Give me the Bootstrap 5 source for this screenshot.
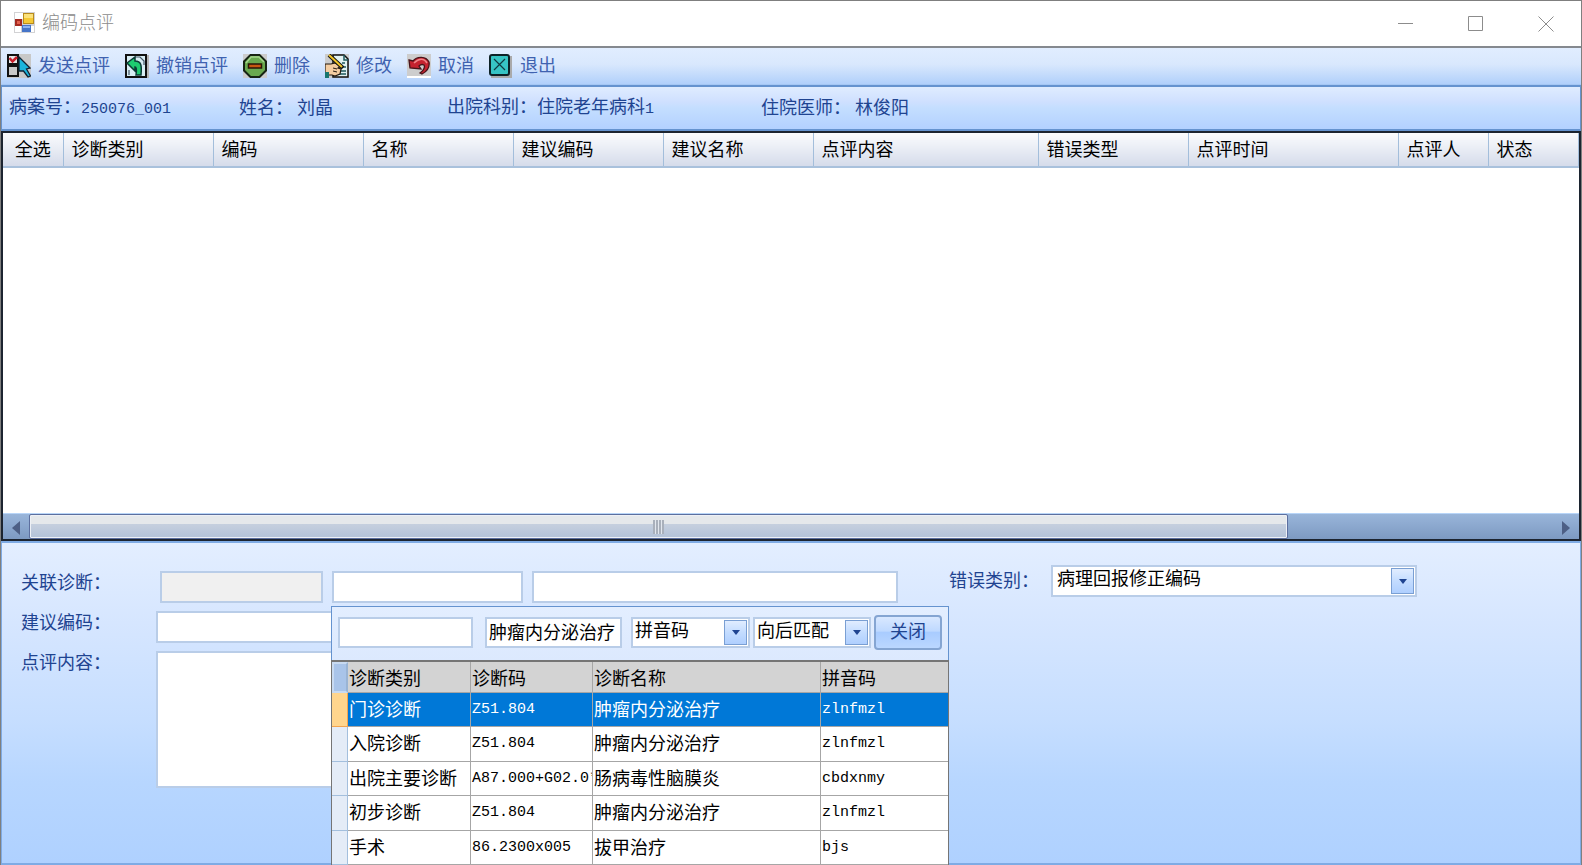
<!DOCTYPE html>
<html lang="zh-CN">
<head>
<meta charset="utf-8">
<meta name="viewport" content="width=device-width, initial-scale=1">
<title>编码点评</title>
<link href="https://cdn.jsdelivr.net/npm/bootstrap@5.3.0/dist/css/bootstrap.min.css" rel="stylesheet">
<style>
  :root { --ink: #1f4491; --line: #b3cbea; --edge: #6593cf; }
  body { font-family: "Liberation Sans", "Noto Sans CJK SC", sans-serif; font-size: 18px; line-height: 24px; color: #000; background: #fff; overflow: hidden; }
  .mono { font-family: "Liberation Mono", monospace; font-size: 15px; }
  .app-window { min-height: 100vh; border: 1px solid #7f7f7f; border-bottom: 0; }

  .title-bar { height: 47px; padding: 0 12px 2px 13px; border-bottom: 2px solid #85898f; color: #8c8c8c; }
  .title-bar h1 { font-size: 18px; line-height: 24px; font-weight: 300; margin: 0; }
  .win-btn { border: 0; background: none; width: 46px; height: 32px; padding: 0; line-height: 1; }

  .tool-strip { height: 37px; padding: 0 6px 1px; gap: 15px; background: linear-gradient(#e1edff, #d9e8fd 45%, #b1d0fb); border-bottom: 1px solid #a5c7f4; }
  .tool-btn { border: 0; background: none; padding: 0; gap: 7px; color: #3f62b0; }
  .tool-btn svg { width: 24px; height: 24px; }

  .info-bar { height: 46px; padding: 0 7px; border: 2px solid var(--edge); border-left-width: 1px; border-right-width: 1px; background: linear-gradient(#dfecff, #cfe0ff 35%, #c4deff 50%, #b3d1ff); color: var(--ink); display: grid; grid-template-columns: 230px 208px 314px 1fr; align-items: center; }

  .review-grid { border: 2px solid #1c2430; min-height: 300px; }
  .review-table { table-layout: fixed; width: 100%; margin: 0; }
  .review-table th { height: 34px; padding: 0 8px; font-weight: 400; line-height: 24px; background: linear-gradient(#fafbfd, #e8ecf4 50%, #d5dbea); border-right: 1px solid #a3bedb; border-bottom: 2px solid #a9c1dc; white-space: nowrap; }

  .h-scroll { height: 26px; background: linear-gradient(#99b5da, #7d9ac2); border-top: 1px solid #b8d5f8; }
  .scroll-arrow { width: 26px; border: 0; padding: 0; background: none; line-height: 1; }
  .scroll-thumb { width: 82.6%; border: 1px solid #5c6f9f; border-radius: 2px; box-shadow: inset 0 0 0 1px #eef1f6; background: linear-gradient(#e5e8eb 0 40%, #c5cfde 41%, #b3c2d8); }
  .grip { width: 11px; height: 14px; background: repeating-linear-gradient(90deg, #a9b0bb 0 2px, #e2e7ee 2px 3px); }

  .edit-panel { height: 324px; padding: 22px 19px 0; border: 2px solid #7fabe4; border-left-width: 1px; border-right-width: 1px; background: linear-gradient(#e3eeff, #d6e6ff 25%, #c6deff 55%, #b7d6ff 75%, #afd1ff); color: var(--ink); }
  .field { display: block; width: 100%; height: 32px; border: 2px solid #b9cde8; border-radius: 0; padding: 0 4px; background: #fff; color: #000; appearance: none; outline: 0; }
  .field:disabled { background: #f0f0f0; }
  .form-rows { width: 928px; padding-top: 6px; }
  .field-label { width: 135px; }
  .drop { position: relative; }
  .drop-mark { position: absolute; top: 3px; right: 3px; bottom: 3px; width: 23px; border: 1px solid #7a9fd3; background: linear-gradient(#e1edff, #c3dcff 50%, #afcfff); pointer-events: none; display: flex; align-items: center; justify-content: center; }
  .field.notes { height: 137px; resize: none; }

  /* lookup window opens over the edit panel */
  .lookup { position: absolute; left: 329px; top: 63px; width: 618px; color: #000; }
  .lookup-head { height: 54px; padding: 8px 6px 0 6px; border: 1px solid var(--edge); border-bottom: 0; background: linear-gradient(#e3eeff, #dce9fe); }
  .lookup-head .field { height: 31px; padding: 0 2px 4px; }
  .lookup-cell { padding-top: 2px; }
  .close-btn { width: 68px; height: 35px; border: 2px solid #85a5d2; border-radius: 4px; padding: 0 0 2px; color: var(--ink); background: linear-gradient(#d9e8ff, #bfd9ff 45%, #a9ccff 50%, #bbd7ff); }
  .lookup-table { table-layout: fixed; width: 100%; margin: 0; border: 2px solid #757575; border-width: 2px 1px 0; border-collapse: separate; border-spacing: 0; background: #fff; }
  .lookup-table th, .lookup-table td { padding: 0 1px; font-weight: 400; white-space: nowrap; overflow: hidden; border-right: 1px solid #a6a6a6; border-bottom: 1px solid #a6a6a6; line-height: 24px; }
  .lookup-table th:last-child, .lookup-table td:last-child { border-right: 0; }
  .lookup-table thead tr { height: 31px; }
  .lookup-table thead th { background: #d3d3d3; padding-top: 4px; }
  .lookup-table tbody tr { height: 34px; }
  .lookup-table tbody tr:nth-child(even) { height: 35px; }
  .lookup-table tbody .row-mark { background: #e4ecf7; border-color: #a3bfdd; }
  .lookup-table thead .row-mark { background: #a9c4e9; border: 2px solid #c8daf1; border-right-color: #9ab4d4; }
  .lookup-table .picked td { background: #0078d7; color: #fff; }
  .lookup-table .picked .row-mark { background: #ffd58d; border-color: #f3a44e; }
</style>
</head>
<body>
<main class="app-window d-flex flex-column">
  <header class="title-bar d-flex align-items-center flex-shrink-0">
    <svg width="21" height="21" viewBox="0 0 21 21" aria-hidden="true" style="margin-right:7px">
      <rect width="21" height="21" fill="#d2d2d4"/><path d="M1 1h8v6H1zM1 14h6v6H1zM17 14h3v6h-3z" fill="#fff"/>
      <rect x="9" y="1" width="11" height="11" fill="#b98b1c"/><rect x="10" y="2" width="9" height="9" fill="#f5c934"/><path d="M10 2h9v4h-9z" fill="#fbe27a"/>
      <rect x="1" y="7" width="7" height="7" fill="#a52a20"/><rect x="3" y="9" width="3" height="3" fill="#e2604e"/>
      <rect x="8" y="13" width="9" height="7" fill="#4675c8"/><path d="M9 14h7v2H9z" fill="#8db2ef"/>
    </svg>
    <h1>编码点评</h1>
    <div class="ms-auto d-flex" style="gap:24px">
      <button class="win-btn" aria-label="最小化"><svg width="16" height="16" viewBox="0 0 16 16" fill="none" stroke="#8c8c8c"><path d="M0 7.500h15"/></svg></button>
      <button class="win-btn" aria-label="最大化"><svg width="16" height="16" viewBox="0 0 16 16" fill="none" stroke="#8c8c8c"><path d="M.5.5h14v14H.5z"/></svg></button>
      <button class="win-btn" aria-label="关闭窗口"><svg width="16" height="16" viewBox="0 0 16 16" fill="none" stroke="#8c8c8c"><path d="M.5.5l15 15M15.500.5l-15 15"/></svg></button>
    </div>
  </header>

  <nav class="tool-strip d-flex align-items-center flex-shrink-0" aria-label="工具栏">
    <button class="tool-btn d-flex align-items-center">
      <svg viewBox="0 0 24 24" aria-hidden="true"><path fill="#c8c8c8" d="M0 0h24v24H0z"/><path fill="#111" d="M0 0h12v23H0z"/><path fill="#e8e8e8" d="M2 2h8v7H2z"/><path fill="#c9c9c9" d="M2 13h8v8H2z"/><path d="M2.500 4l3 3.500L10 3" fill="none" stroke="#c8202c" stroke-width="2.500"/><path d="M12 3l11 11-3.500 1 4 7-2.500 1-4.500-6L12 17z" fill="#1bb4dc" stroke="#123" stroke-width="1.300"/></svg>
      <span>发送点评</span></button>
    <button class="tool-btn d-flex align-items-center">
      <svg viewBox="0 0 24 24" aria-hidden="true"><path fill="#b5b5b5" d="M2 1h22v23H2z"/><path fill="#d8eef4" stroke="#111" stroke-width="2" d="M1 1h20v22H1z"/><path d="M10 3h5l4 4v4M4 21v-5" fill="none" stroke="#456" stroke-width="1.200"/><path d="M2 9l8-6v4c6 0 7 4 6 14h-5c1-6 0-8-1-8v4z" fill="#1dcb70" stroke="#0b3a35" stroke-width="1.500"/></svg>
      <span>撤销点评</span></button>
    <button class="tool-btn d-flex align-items-center">
      <svg viewBox="0 0 24 24" aria-hidden="true"><path fill="#ccc" d="M0 0h24v24H0z"/><path d="M7.500 1h9L23 7.500v9L16.500 23h-9L1 16.500v-9z" fill="#69a94f" stroke="#172414" stroke-width="2"/><path d="M3 9l5-6h8l5 5" fill="none" stroke="#a5d58d" stroke-width="1.500"/><path d="M5.500 10h13v4h-13z" fill="#c65710" stroke="#2b1608" stroke-width="1.500"/></svg>
      <span>删除</span></button>
    <button class="tool-btn d-flex align-items-center">
      <svg viewBox="0 0 24 24" aria-hidden="true"><path fill="#ccc" d="M0 0h24v24H0z"/><path fill="#e2f2f2" stroke="#111" stroke-width="1.500" d="M8 1h11l4 4v18H8z"/><path d="M19 1v5h4M17 9h3M18 13h3M13 20h8M15 17h6" fill="none" stroke="#1f5a5d" stroke-width="1.500"/><path d="M0 10h6l4-1 6 3-3 2 3 1-1 5-5 2-3-1H0z" fill="#f4cda1" stroke="#241a10" stroke-width="1.200"/><path d="M8 14l4 1M8 17l4 1" stroke="#241a10"/><path d="M4 1l14 13" stroke="#111" stroke-width="4"/><path d="M4 1l13 12" stroke="#f1c529" stroke-width="2"/><path fill="#18766f" d="M0 18h4v6H0z"/></svg>
      <span>修改</span></button>
    <button class="tool-btn d-flex align-items-center">
      <svg viewBox="0 0 24 24" aria-hidden="true"><path fill="#cdcdcd" d="M0 0h24v24H0z"/><path fill="#fff" d="M0 22h24v2H0z"/><path d="M2 6l4 1c4-5 13-5 16 1 1 6-3 10-7 12l-2-1c4-3 5-6 4-8-2-1-4 0-5 1l2 3-11-1z" fill="#c5222f" stroke="#47141a" stroke-width="1.300"/><path d="M7 9c5-5 10-5 13 0" fill="none" stroke="#ef8589" stroke-width="1.500"/></svg>
      <span>取消</span></button>
    <button class="tool-btn d-flex align-items-center">
      <svg viewBox="0 0 24 24" aria-hidden="true"><path fill="#aaa" d="M2 2h21v22H2z"/><rect x="1" y="1" width="19" height="20" rx="2" fill="#37c4c4" stroke="#0d2227" stroke-width="2"/><path d="M5 5l11 11M16 5L5 16" stroke="#103a42" stroke-width="1.200"/></svg>
      <span>退出</span></button>
  </nav>

  <section class="info-bar flex-shrink-0">
    <div>病案号：<span class="mono">250076_001</span></div>
    <div>姓名：<span class="ms-1">刘晶</span></div>
    <div>出院科别：住院老年病科<span class="mono">1</span></div>
    <div>住院医师：<span class="ms-1">林俊阳</span></div>
  </section>

  <section class="review-grid d-flex flex-column flex-grow-1">
    <table class="review-table">
      <colgroup><col style="width:60px"><col style="width:150px"><col style="width:150px"><col style="width:150px"><col style="width:150px"><col style="width:150px"><col style="width:225px"><col style="width:150px"><col style="width:210px"><col style="width:90px"><col></colgroup>
      <thead><tr><th class="text-center">全选</th><th>诊断类别</th><th>编码</th><th>名称</th><th>建议编码</th><th>建议名称</th><th>点评内容</th><th>错误类型</th><th>点评时间</th><th>点评人</th><th>状态</th></tr></thead>
    </table>
    <div class="h-scroll d-flex mt-auto">
      <button class="scroll-arrow" aria-label="向左滚动"><svg width="8" height="14" viewBox="0 0 8 14"><path d="M8 0v14L0 7z" fill="#4d5f85"/></svg></button>
      <div class="flex-grow-1 d-flex"><div class="scroll-thumb d-flex align-items-center justify-content-center"><span class="grip"></span></div></div>
      <button class="scroll-arrow" aria-label="向右滚动"><svg width="8" height="14" viewBox="0 0 8 14"><path d="M0 0v14l8-7z" fill="#4d5f85"/></svg></button>
    </div>
  </section>

  <form class="edit-panel position-relative flex-shrink-0">
    <div class="d-flex align-items-start">
      <div class="form-rows">
        <div class="d-flex align-items-start mb-2">
          <label class="field-label" for="rel-kind">关联诊断：</label>
          <div class="d-flex ms-1" style="width:738px;gap:9px">
            <div style="width:163px"><input class="field" id="rel-kind" disabled></div>
            <div style="width:191px"><input class="field" aria-label="关联诊断编码"></div>
            <div class="flex-grow-1"><input class="field" aria-label="关联诊断名称"></div>
          </div>
        </div>
        <div class="d-flex align-items-start mb-2">
          <label class="field-label" for="new-code">建议编码：</label>
          <div style="width:365px"><input class="field" id="new-code"></div>
        </div>
        <div class="d-flex align-items-start">
          <label class="field-label" for="notes">点评内容：</label>
          <div style="width:365px"><textarea class="field notes" id="notes"></textarea></div>
        </div>
      </div>
      <div class="d-flex align-items-center">
        <label for="err-kind" style="width:102px">错误类别：</label>
        <div class="drop" style="width:366px"><select class="field pb-1" id="err-kind"><option>病理回报修正编码</option></select><span class="drop-mark"><svg width="8" height="5" viewBox="0 0 8 5"><path d="M0 0h8L4 5z" fill="#1f4491"/></svg></span></div>
      </div>
    </div>

    <section class="lookup">
      <div class="lookup-head d-flex align-items-start">
        <div class="lookup-cell" style="width:135px;margin-right:12px"><input class="field" aria-label="检索码"></div>
        <div class="lookup-cell" style="width:137px;margin-right:9px"><input class="field" aria-label="诊断名称" value="肿瘤内分泌治疗"></div>
        <div class="lookup-cell" style="width:119px;margin-right:3px"><div class="drop"><select class="field" aria-label="检索方式"><option>拼音码</option></select><span class="drop-mark"><svg width="8" height="5" viewBox="0 0 8 5"><path d="M0 0h8L4 5z" fill="#1f4491"/></svg></span></div></div>
        <div class="lookup-cell" style="width:118px"><div class="drop"><select class="field" aria-label="匹配方式"><option>向后匹配</option></select><span class="drop-mark"><svg width="8" height="5" viewBox="0 0 8 5"><path d="M0 0h8L4 5z" fill="#1f4491"/></svg></span></div></div>
        <button type="button" class="close-btn ms-auto">关闭</button>
      </div>
      <table class="lookup-table">
        <colgroup><col style="width:16px"><col style="width:123px"><col style="width:122px"><col style="width:228px"><col></colgroup>
        <thead><tr><th class="row-mark"></th><th>诊断类别</th><th>诊断码</th><th>诊断名称</th><th>拼音码</th></tr></thead>
        <tbody>
          <tr class="picked"><td class="row-mark"></td><td>门诊诊断</td><td class="mono">Z51.804</td><td>肿瘤内分泌治疗</td><td class="mono">zlnfmzl</td></tr>
          <tr><td class="row-mark"></td><td>入院诊断</td><td class="mono">Z51.804</td><td>肿瘤内分泌治疗</td><td class="mono">zlnfmzl</td></tr>
          <tr><td class="row-mark"></td><td>出院主要诊断</td><td class="mono">A87.000+G02.0*</td><td>肠病毒性脑膜炎</td><td class="mono">cbdxnmy</td></tr>
          <tr><td class="row-mark"></td><td>初步诊断</td><td class="mono">Z51.804</td><td>肿瘤内分泌治疗</td><td class="mono">zlnfmzl</td></tr>
          <tr><td class="row-mark"></td><td>手术</td><td class="mono">86.2300x005</td><td>拔甲治疗</td><td class="mono">bjs</td></tr>
        </tbody>
      </table>
    </section>
  </form>
</main>
<script src="https://cdn.jsdelivr.net/npm/bootstrap@5.3.0/dist/js/bootstrap.bundle.min.js"></script>
</body>
</html>
